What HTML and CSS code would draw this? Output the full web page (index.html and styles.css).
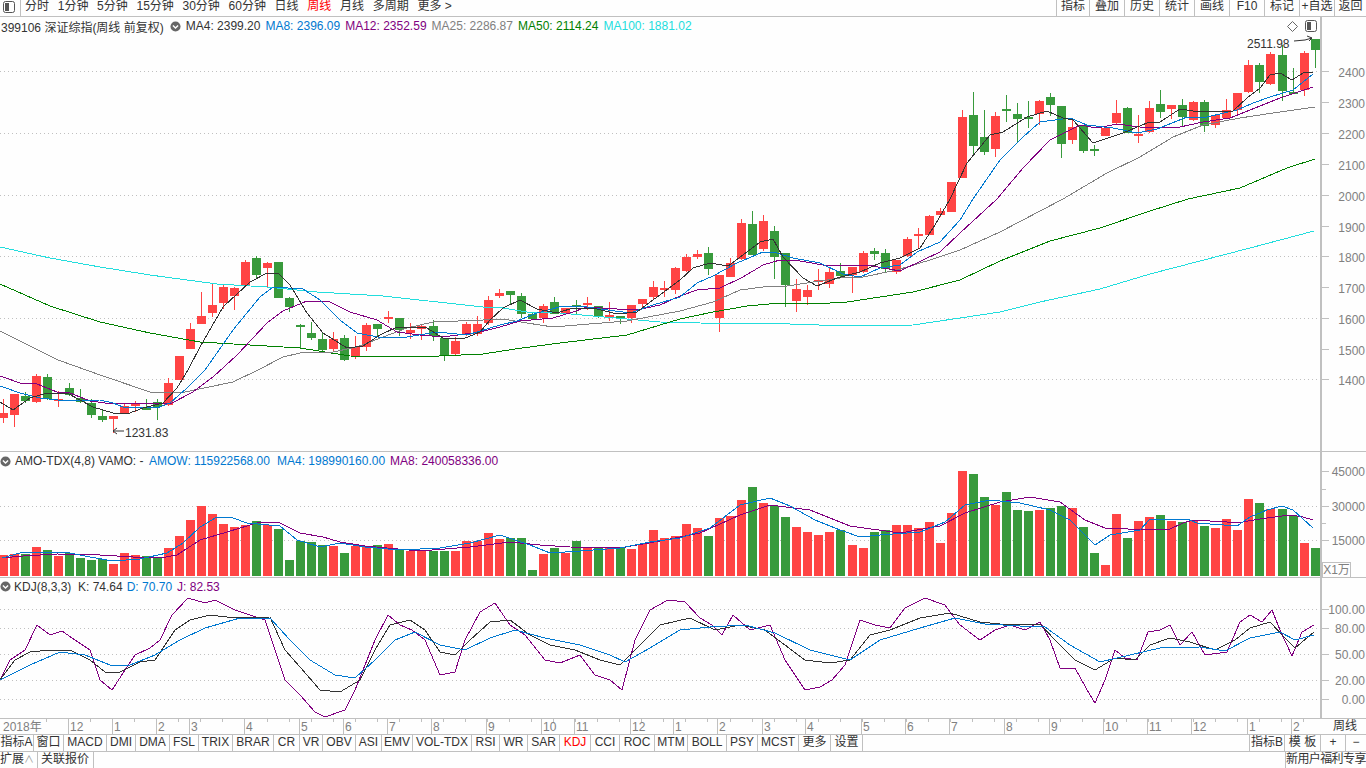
FILE: index.html
```html
<!DOCTYPE html>
<html lang="zh-CN">
<head>
  <meta charset="UTF-8" />
  <title>399106 深证综指</title>
  <link rel="stylesheet" href="styles.css">
</head>
<body>
  <div class="app">
    <div class="toolbar">
      <div class="toggle">
        <svg class="panel-icon" viewBox="0 0 12 12"><rect x="0.5" y="0.5" width="11" height="11" rx="2"/><rect class="fill" x="2" y="2" width="4" height="8"/></svg>
      </div>
      <div class="periods">
        <span>分时</span><span>1分钟</span><span>5分钟</span><span>15分钟</span><span>30分钟</span><span>60分钟</span><span>日线</span><span class="active">周线</span><span>月线</span><span>多周期</span><span>更多 &gt;</span>
      </div>
      <div class="tools">
        <span>指标</span><span>叠加</span><span>历史</span><span>统计</span><span>画线</span><span>F10</span><span>标记</span><span>+自选</span><span>返回</span>
      </div>
    </div>

    <div class="pane pane-main">
      <div class="plot">
        <div class="legend legend-main">
          <span class="title">399106 深证综指(周线 前复权)</span>
          <svg class="drop" viewBox="0 0 12 12"><circle cx="6" cy="6" r="5.5"/><path d="M3.2 4.8 6 7.6 8.8 4.8"/></svg>
          <span class="c-dark">MA4: 2399.20</span>
          <span class="c-blue">MA8: 2396.09</span>
          <span class="c-purple">MA12: 2352.59</span>
          <span class="c-gray">MA25: 2286.87</span>
          <span class="c-green">MA50: 2114.24</span>
          <span class="c-cyan">MA100: 1881.02</span>
          <div class="corner">
            <svg class="diamond" viewBox="0 0 11 11"><path d="M5.5 0.5 10.5 5.5 5.5 10.5 0.5 5.5Z"/></svg>
            <svg class="panel-icon" viewBox="0 0 12 12"><rect x="0.5" y="0.5" width="11" height="11" rx="2"/><rect class="fill" x="2" y="2" width="4" height="8"/></svg>
          </div>
        </div>
        <svg id="mainChart" class="chart chart-main" viewBox="0 35 1320 416"></svg>
      </div>
      <svg id="mainAxis" class="axis" viewBox="1322 17 44 434"></svg>
    </div>

    <div class="pane pane-vol">
      <div class="plot">
        <div class="legend legend-low">
          <svg class="drop" viewBox="0 0 12 12"><circle cx="6" cy="6" r="5.5"/><path d="M3.2 4.8 6 7.6 8.8 4.8"/></svg>
          <span class="name-vol">AMO-TDX(4,8) VAMO: -</span>
          <span class="c-blue amow">AMOW: 115922568.00</span>
          <span class="c-blue">MA4: 198990160.00</span>
          <span class="c-purple">MA8: 240058336.00</span>
        </div>
        <svg id="volChart" class="chart chart-vol" viewBox="0 470 1320 107"></svg>
      </div>
      <div class="axis-box">
        <svg id="volAxis" class="axis" viewBox="1322 452 44 125"></svg>
        <span class="unit">X1万</span>
      </div>
    </div>

    <div class="pane pane-kdj">
      <div class="plot">
        <div class="legend legend-low legend-kdj">
          <svg class="drop" viewBox="0 0 12 12"><circle cx="6" cy="6" r="5.5"/><path d="M3.2 4.8 6 7.6 8.8 4.8"/></svg>
          <span class="name-kdj">KDJ(8,3,3)</span>
          <span class="c-dark">K: 74.64</span>
          <span class="c-blue">D: 70.70</span>
          <span class="c-purple">J: 82.53</span>
        </div>
        <svg id="kdjChart" class="chart chart-kdj" viewBox="0 595 1320 123"></svg>
      </div>
      <svg id="kdjAxis" class="axis" viewBox="1322 578 44 140"></svg>
    </div>

    <div class="timebar">
      <svg id="timeAxis" class="time-axis" viewBox="0 719 1321 15"></svg>
      <div class="time-unit">周线</div>
    </div>

    <div class="tabs">
      <span>指标A</span><span>窗口</span><span>MACD</span><span>DMI</span><span>DMA</span><span>FSL</span><span>TRIX</span><span>BRAR</span><span>CR</span><span>VR</span><span>OBV</span><span>ASI</span><span>EMV</span><span>VOL-TDX</span><span>RSI</span><span>WR</span><span>SAR</span><span class="active">KDJ</span><span>CCI</span><span>ROC</span><span>MTM</span><span>BOLL</span><span>PSY</span><span>MCST</span><span>更多</span><span>设置</span>
      <i></i>
      <span class="edge">指标B</span><span>模 板</span><span>+</span><span class="last">−</span>
    </div>

    <div class="statusbar">
      <span class="expand">扩展<b>∧</b></span>
      <span class="linked">关联报价</span>
      <span class="promo">新用户福利专享</span>
    </div>
  </div>

  <script src="chart.js"></script>
</body>
</html>
```

FILE: styles.css
```css
* {
  box-sizing: border-box;
}

html,
body {
  margin: 0;
  padding: 0;
}

body {
  font-family: "Liberation Sans", "Noto Sans CJK SC", sans-serif;
  font-size: 12px;
  color: #333;
  background: #fefefe;
}

.app {
  width: 1366px;
  height: 768px;
  overflow: hidden;
}

.toolbar {
  display: flex;
  height: 17px;
  line-height: 13px;
  border-bottom: 1px solid #c0c0c0;
}

.toggle {
  width: 21px;
  padding: 1px 0 0 3px;
  border-right: 1px solid #c0c0c0;
}

.panel-icon {
  width: 12px;
  height: 12px;
}

.panel-icon rect {
  fill: none;
  stroke: #555;
}

.panel-icon .fill {
  fill: #555;
  stroke: none;
}

.periods {
  display: flex;
  gap: 8.7px;
  padding-left: 4px;
}

.periods .active,
.tabs .active {
  color: #f00;
}

.tools {
  display: grid;
  grid-template-columns: 33px 35px 35px 35px 35px 35px 35px 35px 32px;
  margin-left: auto;
  width: 310px;
}

.tools span {
  border-left: 1px solid #c0c0c0;
  text-align: center;
}

.pane {
  display: flex;
}

.plot {
  width: 1320px;
}

.pane-main {
  height: 435px;
  border-bottom: 1px solid #c0c0c0;
}

.pane-vol {
  height: 126px;
  border-bottom: 1px solid #c0c0c0;
}

.pane-kdj {
  height: 141px;
  border-bottom: 1px solid #c0c0c0;
}

.legend {
  display: flex;
  align-items: center;
  gap: 5px;
  white-space: nowrap;
}

.legend-main {
  height: 18px;
  padding-left: 1px;
}

.legend-main .title {
  margin-right: 1px;
}

.legend-low {
  height: 18px;
}

.legend-low .drop {
  margin-right: -1px;
}

.legend-kdj {
  height: 17px;
  gap: 4px;
}

.legend-kdj .c-purple {
  margin-left: 1px;
}

.name-vol {
  width: 129px;
}

.amow {
  margin-right: 2px;
}

.name-kdj {
  width: 60px;
}

.drop {
  width: 11px;
  height: 11px;
  flex: none;
}

.drop circle {
  fill: #666;
}

.drop path {
  fill: none;
  stroke: #fff;
  stroke-width: 1.5;
}

.corner {
  display: flex;
  align-items: center;
  gap: 7px;
  margin-left: auto;
  padding-right: 3px;
}

.diamond {
  width: 11px;
  height: 11px;
}

.diamond path {
  fill: none;
  stroke: #666;
}

.c-dark {
  color: #333;
}

.c-blue {
  color: #0078d0;
}

.c-purple {
  color: #800080;
}

.c-gray {
  color: #808080;
}

.c-green {
  color: #008000;
}

.c-cyan {
  color: #22dddd;
}

.chart {
  display: block;
  width: 1320px;
}

.chart-main {
  height: 416px;
}

.chart-vol {
  height: 107px;
}

.chart-kdj {
  height: 123px;
}

.chart line.grid {
  stroke: #c0c0c0;
  stroke-dasharray: 1 3;
}

.chart .ma {
  fill: none;
  stroke-width: 1;
  shape-rendering: crispEdges;
}

.chart .body,
.chart .wick {
  shape-rendering: crispEdges;
}

.red {
  fill: #ff4444;
}

.green {
  fill: #389a3c;
}

.note {
  fill: #333;
  font-size: 12px;
}

.note-line {
  fill: none;
  stroke: #333;
}

.axis {
  display: block;
  width: 46px;
  height: 100%;
  border-left: 2px solid #c0c0c0;
}

.axis line {
  stroke: #c0c0c0;
  shape-rendering: crispEdges;
}

.axis text {
  fill: #808080;
  font-size: 12px;
  text-anchor: end;
}

.axis-box {
  position: relative;
  width: 46px;
}

.unit {
  position: absolute;
  left: 2px;
  bottom: 0;
  width: 29px;
  height: 15px;
  line-height: 14px;
  text-align: center;
  color: #808080;
  border: 1px solid #c0c0c0;
  border-bottom: 0;
  background: #fefefe;
}

.timebar {
  display: flex;
  height: 16px;
  border-bottom: 1px solid #c0c0c0;
}

.time-axis {
  display: block;
  width: 1321px;
  height: 15px;
}

.time-axis line {
  stroke: #c0c0c0;
  shape-rendering: crispEdges;
}

.time-axis text {
  fill: #808080;
  font-size: 12px;
}

.time-unit {
  width: 45px;
  padding-left: 3px;
  line-height: 15px;
  text-align: center;
}

.tabs {
  display: grid;
  grid-template-columns: 34px 30px 43px 29px 34px 29px 34px 41px 26px 23px 33px 26px 31px 59px 28px 28px 32px 31px 29px 35px 33px 39px 31px 41px 32px 32px 386px 36px 36px 25px 20px;
  height: 17px;
  line-height: 15px;
  border-bottom: 1px solid #c0c0c0;
  white-space: nowrap;
}

.tabs span {
  text-align: center;
  border-right: 1px solid #c0c0c0;
}

.tabs .edge {
  border-left: 1px solid #c0c0c0;
}

.tabs .last {
  border-right: 0;
}

.statusbar {
  display: flex;
  height: 16px;
  line-height: 15px;
}

.expand {
  width: 38px;
  border-right: 1px solid #c0c0c0;
}

.expand b {
  font-weight: normal;
  color: #999;
  font-size: 10px;
}

.linked {
  width: 56px;
  padding-left: 3px;
  border-right: 1px solid #c0c0c0;
}

.promo {
  margin-left: auto;
  width: 81px;
  border-left: 1px solid #c0c0c0;
  letter-spacing: -0.6px;
  white-space: nowrap;
}
```

FILE: chart.js
```js
const NS = "http://www.w3.org/2000/svg";

// colour, body top, body bottom, wick top, wick bottom (screen pixels)
const candles = [
  ["r",413,418,399,423],["r",394,415,394,427],["g",396,401,392,403],["r",376,402,374,403],["g",377,399,374,400],
  ["r",399,400,391,407],["g",388,395,383,396],["g",398,402,389,403],["g",403,415,399,418],["g",416,420,410,422],
  ["r",416,419,416,433],["r",406,414,403,414],["r",403,406,401,412],["g",408,409,399,409],["g",402,407,399,420],
  ["r",383,405,378,406],["r",356,380,356,380],["r",329,349,323,349],["r",316,324,292,324],["r",305,313,283,317],
  ["r",287,303,285,309],["r",288,296,287,310],["r",262,285,260,287],["g",258,275,256,278],["r",263,268,262,287],
  ["g",262,298,262,298],["g",298,307,297,312],["g",325,327,324,348],["g",333,338,322,340],["g",339,350,332,351],
  ["r",339,349,332,351],["g",338,360,335,361],["r",347,357,336,359],["r",325,347,323,351],["g",324,329,324,336],
  ["r",317,319,311,323],["g",318,330,318,336],["r",330,333,323,339],["r",326,329,324,340],["g",326,336,320,341],
  ["g",338,355,338,361],["r",341,354,337,356],["r",324,335,322,336],["r",324,334,316,336],["r",300,323,296,325],
  ["r",293,296,289,298],["g",291,295,291,304],["g",296,314,293,318],["g",314,319,312,319],["r",306,318,304,323],
  ["g",302,314,297,314],["r",308,313,308,315],["g",305,306,300,314],["r",303,305,297,310],["g",306,316,306,318],
  ["r",315,317,302,321],["g",316,319,316,324],["r",305,318,305,323],["r",299,304,299,308],["r",287,297,281,299],
  ["r",288,289,281,297],["r",268,290,267,294],["r",257,271,254,272],["r",254,257,250,259],["g",253,269,247,275],
  ["r",275,318,275,332],["r",263,277,258,277],["r",223,259,219,260],["g",224,255,211,255],["r",221,249,215,251],
  ["g",231,257,226,279],["g",253,285,253,307],["r",289,301,279,312],["r",290,297,285,305],["r",280,281,269,290],
  ["r",272,284,268,288],["g",271,276,263,277],["r",267,275,267,293],["r",253,272,251,273],["g",251,254,248,260],
  ["g",253,269,249,273],["r",260,272,260,274],["r",239,256,237,257],["r",234,235,228,248],["r",216,235,215,235],
  ["r",211,215,208,217],["r",182,212,182,212],["r",117,178,110,178],["g",115,146,92,155],["g",137,152,110,155],
  ["r",116,149,112,157],["g",109,111,95,122],["g",114,119,103,143],["g",117,118,101,128],["r",101,114,100,125],
  ["g",97,105,93,116],["g",106,144,106,158],["r",127,140,118,144],["g",125,151,125,153],["g",149,150,145,156],
  ["r",128,136,128,136],["r",113,123,100,124],["g",108,133,107,133],["r",134,136,115,143],["r",108,132,101,133],
  ["g",104,112,90,118],["r",105,109,105,119],["g",105,117,99,126],["r",102,120,101,121],["g",102,126,100,132],
  ["r",115,125,115,128],["r",110,118,99,119],["r",93,110,93,116],["r",65,92,60,93],["g",65,82,63,93],
  ["r",54,84,52,85],["g",55,91,45,101],["g",92,93,68,94],["r",53,90,51,96],["g",39,50,39,68]
];

const volume = [
  555,554,554,547,550,556,553,558,560,559,564,553,555,556,558,548,536,520,506,514,
  524,527,525,521,525,529,560,541,542,545,546,553,546,546,545,544,549,551,550,551,
  551,551,541,541,533,539,538,538,570,554,548,553,541,547,547,547,548,549,544,530,
  538,536,524,528,536,518,516,500,487,503,506,517,527,532,535,532,530,545,548,532,
  530,525,525,528,522,543,513,471,474,497,505,492,510,511,510,508,506,508,527,553,
  565,514,538,521,517,515,521,522,520,526,528,519,530,499,503,509,509,516,543,548
];

const mainLines = {
  "#22dddd": [0,247,50,258,100,267,150,275,217,284,267,287,317,292,383,296,483,307,503,308,527,312,560,313,593,316,627,319,660,322,700,323,790,324,847,326,913,325,960,318,1000,312,1040,302,1100,289,1150,274,1200,261,1250,248,1314,231],
  "#008000": [0,284,50,306,100,322,150,333,200,342,250,345,300,348,350,356,417,357,483,354,515,349,560,343,627,335,680,319,713,312,747,306,780,303,813,304,847,302,880,297,913,292,960,280,1000,261,1050,241,1100,228,1150,211,1188,199,1240,188,1287,168,1315,159],
  "#808080": [0,331,58,360,100,375,150,392,180,393,233,382,258,370,283,357,300,353,333,352,357,347,383,337,407,328,433,322,483,320,503,319,527,323,553,327,577,325,627,321,680,311,713,302,740,290,763,287,787,286,840,278,863,277,897,270,930,260,960,250,1000,232,1063,199,1107,173,1140,157,1173,137,1203,125,1240,118,1273,113,1315,107],
  "#800080": [0,376,20,383,37,384,57,392,70,393,90,401,113,404,140,403,170,404,193,392,213,377,237,355,267,323,283,311,307,301,330,302,350,312,377,320,397,332,420,335,443,337,480,332,500,327,520,321,553,318,573,312,587,307,617,309,637,310,660,305,680,296,697,290,720,288,743,277,763,265,780,260,800,261,823,265,847,266,867,265,900,271,923,260,940,252,960,233,997,199,1023,168,1050,140,1080,125,1097,128,1117,124,1140,127,1180,127,1203,122,1230,118,1250,110,1280,98,1313,87],
  "#0078d0": [0,386,20,393,40,398,67,401,100,400,113,403,123,407,157,408,170,403,187,388,205,370,233,330,260,297,273,287,303,289,320,300,340,320,357,333,383,338,407,337,437,332,467,335,500,325,517,321,537,313,563,306,587,307,600,309,630,313,653,305,680,297,697,283,713,276,737,263,763,252,777,253,793,258,820,263,843,274,860,277,880,268,900,265,917,252,940,242,960,220,973,199,1000,160,1023,137,1040,122,1070,118,1087,125,1113,128,1137,133,1157,129,1187,117,1207,117,1237,110,1253,103,1270,97,1293,90,1313,74],
  "#333333": [0,402,13,410,30,398,47,393,67,393,93,407,113,413,127,414,143,408,163,403,177,388,188,370,200,347,223,307,250,282,267,273,278,273,290,285,307,313,323,333,347,348,363,346,380,335,397,327,427,328,443,338,463,339,480,332,490,320,503,308,520,300,537,309,557,313,573,308,593,308,617,314,637,312,653,300,680,280,693,268,710,263,728,266,743,255,760,242,773,239,783,257,803,278,817,286,837,278,860,272,880,263,900,258,920,248,935,225,950,199,967,163,990,135,1003,132,1027,117,1047,111,1063,118,1073,120,1093,143,1123,133,1147,123,1160,122,1180,109,1200,112,1233,111,1247,98,1260,88,1270,75,1280,73,1292,80,1303,73,1313,72]
};

const volLines = {
  "#800080": [2,558,23,556,57,554,100,555,133,557,160,558,177,555,200,540,227,532,260,522,280,523,300,533,323,537,340,542,365,546,420,551,470,547,510,542,540,545,570,547,620,548,660,541,700,533,740,515,770,505,810,510,850,526,900,533,940,526,965,513,1000,502,1030,497,1060,502,1085,520,1105,528,1150,530,1170,529,1183,523,1193,520,1227,522,1237,523,1260,519,1290,515,1303,517,1313,520],
  "#0078d0": [2,558,20,553,40,552,70,553,90,557,113,561,140,559,167,553,183,543,200,527,217,517,233,518,247,523,280,526,297,540,320,547,340,543,365,547,400,550,440,548,470,543,500,535,530,545,550,553,580,551,620,548,650,542,680,538,710,528,740,505,770,498,790,506,815,520,840,530,860,537,880,535,920,532,945,522,965,505,990,500,1020,503,1050,510,1070,520,1095,545,1110,535,1140,530,1150,519,1187,519,1197,523,1210,524,1237,526,1250,517,1267,510,1282,506,1293,510,1313,528]
};

const kdjLines = {
  "#800080": [0,680,10,660,25,650,37,625,50,635,62,631,75,640,90,650,100,680,112,690,125,670,135,655,150,648,160,640,172,615,188,598,205,603,215,600,235,610,265,620,275,650,285,680,300,695,315,712,325,717,345,710,355,690,365,665,375,640,388,615,400,625,412,630,425,640,440,675,455,672,465,640,480,612,495,603,510,625,525,635,545,660,560,663,580,655,595,675,610,680,622,690,635,640,650,610,668,600,685,602,700,618,712,625,722,635,733,615,750,630,770,625,785,660,805,690,820,687,832,680,845,665,860,620,875,625,890,628,905,608,925,598,945,605,960,625,980,640,995,630,1010,625,1025,630,1040,622,1050,640,1060,668,1075,668,1090,695,1095,703,1105,680,1115,650,1125,658,1137,660,1148,632,1160,630,1170,625,1180,645,1192,632,1205,655,1227,652,1240,622,1250,615,1262,622,1272,610,1280,630,1292,656,1302,632,1314,625],
  "#333333": [0,680,15,660,30,652,50,650,70,650,90,660,105,672,120,672,140,662,155,660,175,630,190,620,210,615,235,618,270,617,285,650,300,667,320,690,340,692,360,680,375,650,390,625,410,620,425,630,440,652,455,655,470,640,490,622,510,620,530,635,550,645,575,650,600,660,620,665,640,645,660,625,690,618,715,630,740,625,765,630,785,645,805,660,830,663,850,660,870,635,890,630,920,618,950,613,980,622,1010,625,1040,624,1055,640,1075,660,1095,670,1115,658,1135,660,1150,645,1170,638,1190,642,1215,650,1235,640,1250,628,1270,622,1285,638,1295,648,1314,632],
  "#0078d0": [0,680,30,665,60,652,85,655,110,665,130,665,155,655,180,640,205,628,240,618,270,618,290,640,310,660,335,675,355,678,375,660,395,640,415,632,440,645,465,650,490,638,515,630,545,638,580,645,610,655,625,662,650,648,680,630,710,627,745,625,775,633,810,650,850,660,880,640,920,628,955,618,985,624,1020,626,1045,627,1070,645,1100,662,1130,655,1160,648,1200,647,1225,651,1250,638,1280,632,1295,640,1314,635]
};

const months = [
  [68,"12"],[112,"1"],[156,"2"],[189,"3"],[244,"4"],[299,"5"],[343,"6"],[387,"7"],[431,"8"],[486,"9"],
  [541,"10"],[574,"11"],[630,"12"],[673,"1"],[717,"2"],[762,"3"],[805,"4"],[861,"5"],[905,"6"],[949,"7"],
  [1004,"8"],[1049,"9"],[1103,"10"],[1147,"11"],[1191,"12"],[1247,"1"],[1291,"2"]
];

function add(svg, tag, attrs, text) {
  const el = document.createElementNS(NS, tag);
  for (const key in attrs) el.setAttribute(key, attrs[key]);
  if (text) el.textContent = text;
  svg.appendChild(el);
  return el;
}

function barX(i) {
  return 2.5 + i * 11.026;
}

function grid(svg, ys) {
  ys.forEach(function (y) {
    add(svg, "line", { class: "grid", x1: 0, x2: 1320, y1: y + 0.5, y2: y + 0.5 });
  });
}

function lines(svg, set) {
  for (const colour in set) {
    const p = set[colour];
    const pts = [];
    for (let i = 0; i < p.length; i += 2) pts.push(p[i] + "," + p[i + 1]);
    add(svg, "polyline", { class: "ma", stroke: colour, points: pts.join(" ") });
  }
}

function axis(svg, labels, minor, textOffset) {
  labels.forEach(function (item) {
    add(svg, "line", { x1: 1322, x2: 1329, y1: item[0] + 0.5, y2: item[0] + 0.5 });
    add(svg, "text", { x: 1365, y: item[0] + textOffset }, item[1]);
  });
  minor.forEach(function (y) {
    add(svg, "line", { x1: 1322, x2: 1326, y1: y + 0.5, y2: y + 0.5 });
  });
}

const mainChart = document.getElementById("mainChart");
grid(mainChart, [71, 133, 195, 256, 318, 379]);
candles.forEach(function (c, i) {
  const x = Math.round(barX(i));
  const cls = c[0] === "r" ? "red" : "green";
  add(mainChart, "rect", { class: "wick " + cls, x: x, y: c[3], width: 1, height: c[4] - c[3] });
  add(mainChart, "rect", { class: "body " + cls, x: x - 4, y: c[1], width: 9, height: Math.max(c[2] - c[1], 2) });
});
lines(mainChart, mainLines);
add(mainChart, "text", { class: "note", x: 1247, y: 48 }, "2511.98");
add(mainChart, "path", { class: "note-line", d: "M1294 41 1305 40 1312 38M1307 36 1312 38 1309 41" });
add(mainChart, "text", { class: "note", x: 125, y: 437 }, "1231.83");
add(mainChart, "path", { class: "note-line", d: "M124 431H113M117 428 113 431 117 434" });

axis(document.getElementById("mainAxis"), [
  [71,"2400"],[102,"2300"],[133,"2200"],[164,"2100"],[195,"2000"],[226,"1900"],
  [256,"1800"],[287,"1700"],[318,"1600"],[349,"1500"],[379,"1400"]
], [], 6);

const volChart = document.getElementById("volChart");
grid(volChart, [506, 540]);
volume.forEach(function (top, i) {
  add(volChart, "rect", {
    class: "body " + (candles[i][0] === "r" ? "red" : "green"),
    x: Math.round(barX(i)) - 4, y: top, width: 9, height: 576 - top
  });
});
lines(volChart, volLines);
axis(document.getElementById("volAxis"), [[471,"45000"],[506,"30000"],[540,"15000"]], [489, 523], 5);

const kdjChart = document.getElementById("kdjChart");
grid(kdjChart, [609, 628, 654, 680, 699]);
lines(kdjChart, kdjLines);
axis(document.getElementById("kdjAxis"), [[609,"100.00"],[628,"80.00"],[654,"50.00"],[680,"20.00"],[699,"0.00"]], [], 5);

const timeAxis = document.getElementById("timeAxis");
add(timeAxis, "text", { x: 3, y: 731 }, "2018年");
for (let x = 46; x < 1320; x += 22.05) {
  add(timeAxis, "line", { x1: Math.round(x) + 0.5, x2: Math.round(x) + 0.5, y1: 719, y2: 722 });
}
months.forEach(function (m) {
  add(timeAxis, "line", { x1: m[0] + 0.5, x2: m[0] + 0.5, y1: 719, y2: 734 });
  add(timeAxis, "text", { x: m[0] + 2, y: 731 }, m[1]);
});
```
